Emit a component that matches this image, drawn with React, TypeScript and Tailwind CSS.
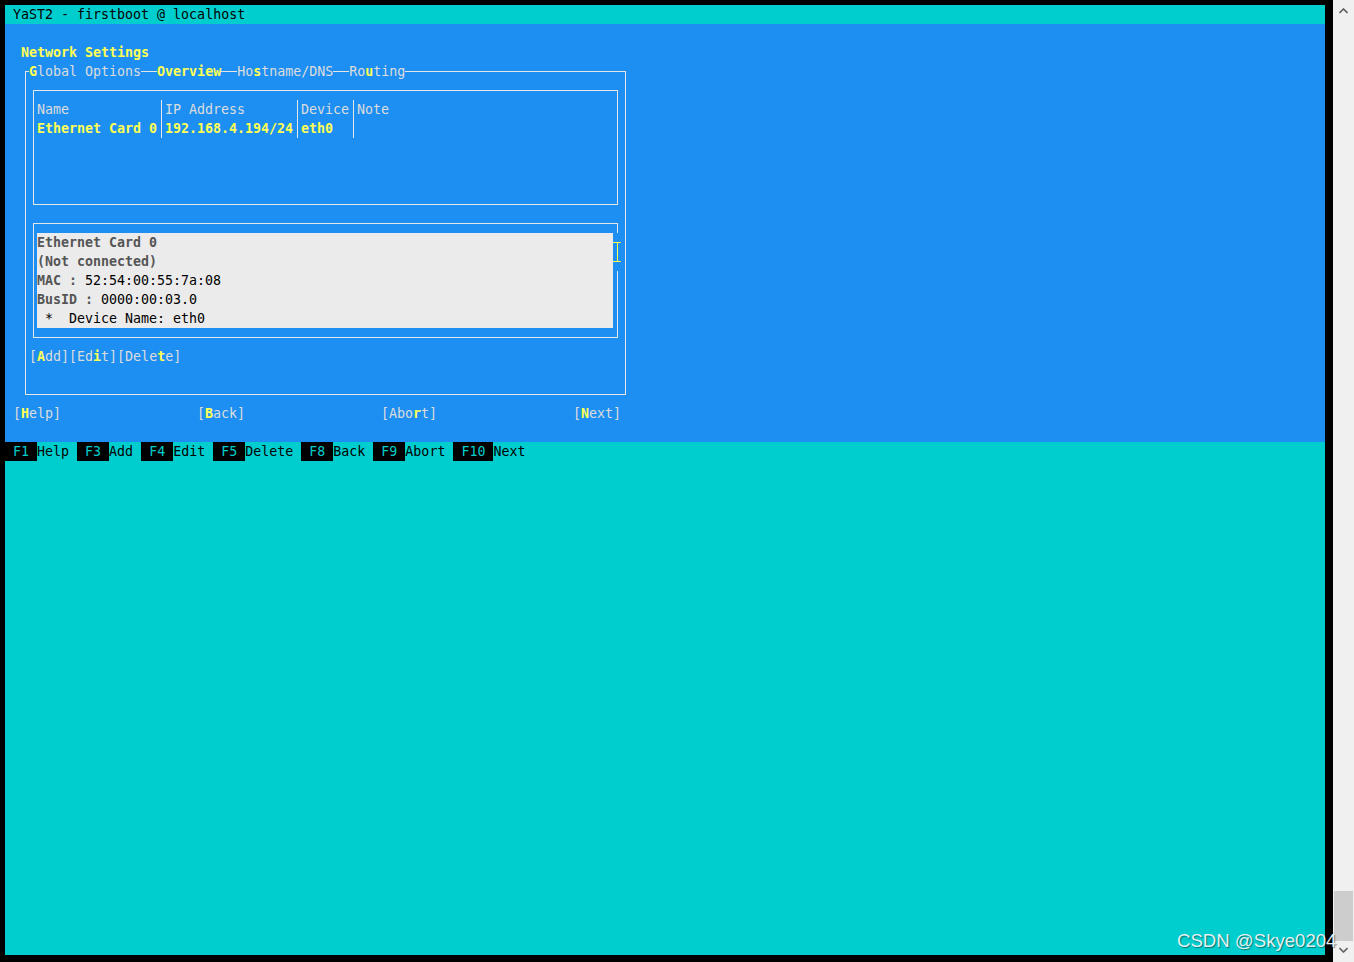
function K({ c }: { c: string }) {
  return <span className="font-bold text-[#ffff54]">{c}</span>;
}

function Chevron({ down }: { down?: boolean }) {
  return (
    <svg width="9" height="6" viewBox="0 0 9 6">
      <polyline
        points={down ? "0.5,1 4.5,5 8.5,1" : "0.5,5 4.5,1 8.5,5"}
        stroke="#606060"
        strokeWidth="1.6"
        fill="none"
      />
    </svg>
  );
}

export default function App() {
  return (
    <div className="relative flex w-[1354px] h-[962px] bg-black overflow-hidden">
      <div className="pl-[5px] pt-[5px]">
        <div className="flex flex-col w-[1320px] h-[950px] font-['DejaVu_Sans_Mono','Liberation_Mono',monospace] text-[13.3px] leading-[19px] whitespace-pre">
          {/* title */}
          <div className="h-[19px] bg-[#00cece] pl-[8px] text-black">YaST2 - firstboot @ localhost</div>

          {/* dialog */}
          <div className="h-[418px] bg-[#1e8ff2] text-[#dcdcdc] pt-[19px]">
            <div className="h-[19px] pl-[16px] font-bold text-[#ffff54]">Network Settings</div>

            <div className="ml-[20px] mt-[9px] w-[601px] h-[324px] border border-[#e6e6e6]">
              {/* tabs on the frame line */}
              <div className="-mt-[10px] h-[19px] flex pl-[3px]">
                <span className="bg-[#1e8ff2]">
                  <K c="G" />lobal Options
                </span>
                <span className="w-[16px]" />
                <span className="bg-[#1e8ff2] font-bold text-[#ffff54]">Overview</span>
                <span className="w-[16px]" />
                <span className="bg-[#1e8ff2]">
                  Ho<K c="s" />tname/DNS
                </span>
                <span className="w-[16px]" />
                <span className="bg-[#1e8ff2]">
                  Ro<K c="u" />ting
                </span>
              </div>

              {/* table */}
              <div className="ml-[7px] mt-[9px] w-[585px] h-[115px] border border-[#e6e6e6] pl-[3px] pt-[9px]">
                <div className="flex h-[38px]">
                  <div className="w-[124px] shrink-0">
                    <div>Name</div>
                    <div className="font-bold text-[#ffff54]">Ethernet Card 0</div>
                  </div>
                  <div className="w-px h-[38px] shrink-0 bg-[#e6e6e6]" />
                  <div className="w-[135px] shrink-0 pl-[3px]">
                    <div>IP Address</div>
                    <div className="font-bold text-[#ffff54]">192.168.4.194/24</div>
                  </div>
                  <div className="w-px h-[38px] shrink-0 bg-[#e6e6e6]" />
                  <div className="w-[55px] shrink-0 pl-[3px]">
                    <div>Device</div>
                    <div className="font-bold text-[#ffff54]">eth0</div>
                  </div>
                  <div className="w-px h-[38px] shrink-0 bg-[#e6e6e6]" />
                  <div className="pl-[3px]">
                    <div>Note</div>
                  </div>
                </div>
              </div>

              {/* details */}
              <div className="ml-[7px] mt-[18px] w-[585px] h-[115px] border-l border-t border-b border-[#e6e6e6] flex items-start">
                <div className="shrink-0 ml-[3px] mt-[9px] w-[576px] h-[95px] bg-[#ebebeb] text-black">
                  <div className="font-bold text-[#555555]">Ethernet Card 0</div>
                  <div className="font-bold text-[#555555]">(Not connected)</div>
                  <div>
                    <span className="font-bold text-[#555555]">MAC :</span> 52:54:00:55:7a:08
                  </div>
                  <div>
                    <span className="font-bold text-[#555555]">BusID :</span> 0000:00:03.0
                  </div>
                  <div> *  Device Name: eth0</div>
                </div>
                <div className="shrink-0 flex flex-col w-[8px] h-full">
                  <div className="ml-[4px] w-px h-[9px] bg-[#e6e6e6]" />
                  <div className="h-[9px]" />
                  <div className="flex w-[8px] h-[20px] border-t border-b border-[#ffff54]">
                    <div className="ml-[4px] w-px bg-[#ffff54]" />
                  </div>
                  <div className="h-[9px]" />
                  <div className="ml-[4px] w-px flex-1 bg-[#e6e6e6]" />
                </div>
              </div>

              <div className="ml-[3px] mt-[9px] h-[19px]">
                [<K c="A" />dd][Ed<K c="i" />t][Dele<K c="t" />e]
              </div>
            </div>

            {/* dialog buttons */}
            <div className="mt-[9px] h-[19px] flex pl-[8px]">
              <span className="w-[184px]">
                [<K c="H" />elp]
              </span>
              <span className="w-[184px]">
                [<K c="B" />ack]
              </span>
              <span className="w-[192px]">
                [Abo<K c="r" />t]
              </span>
              <span>
                [<K c="N" />ext]
              </span>
            </div>
          </div>

          {/* function keys */}
          <div className="h-[19px] flex bg-[#00cece] text-black">
            <span className="bg-black text-[#00cece]"> F1 </span>
            <span>Help </span>
            <span className="bg-black text-[#00cece]"> F3 </span>
            <span>Add </span>
            <span className="bg-black text-[#00cece]"> F4 </span>
            <span>Edit </span>
            <span className="bg-black text-[#00cece]"> F5 </span>
            <span>Delete </span>
            <span className="bg-black text-[#00cece]"> F8 </span>
            <span>Back </span>
            <span className="bg-black text-[#00cece]"> F9 </span>
            <span>Abort </span>
            <span className="bg-black text-[#00cece]"> F10 </span>
            <span>Next</span>
          </div>

          <div className="flex-1 bg-[#00cece]" />
        </div>
      </div>

      <div className="w-[8px]" />

      {/* window scrollbar */}
      <div className="flex flex-col items-center w-[21px] h-[962px] bg-[#f0f0f0] pt-[8px] pb-[9px]">
        <Chevron />
        <div className="flex-1" />
        <div className="w-[19px] h-[50px] bg-[#cdcdcd]" />
        <div className="mt-[6px] flex">
          <Chevron down />
        </div>
      </div>

      <div className="absolute left-[1177px] top-[932px] text-[18.6px] leading-none font-['Liberation_Sans',Arial,sans-serif] text-[#e4f2f2] [text-shadow:1px_1px_1px_rgba(0,0,0,0.45)]">
        CSDN @Skye0204
      </div>
    </div>
  );
}
